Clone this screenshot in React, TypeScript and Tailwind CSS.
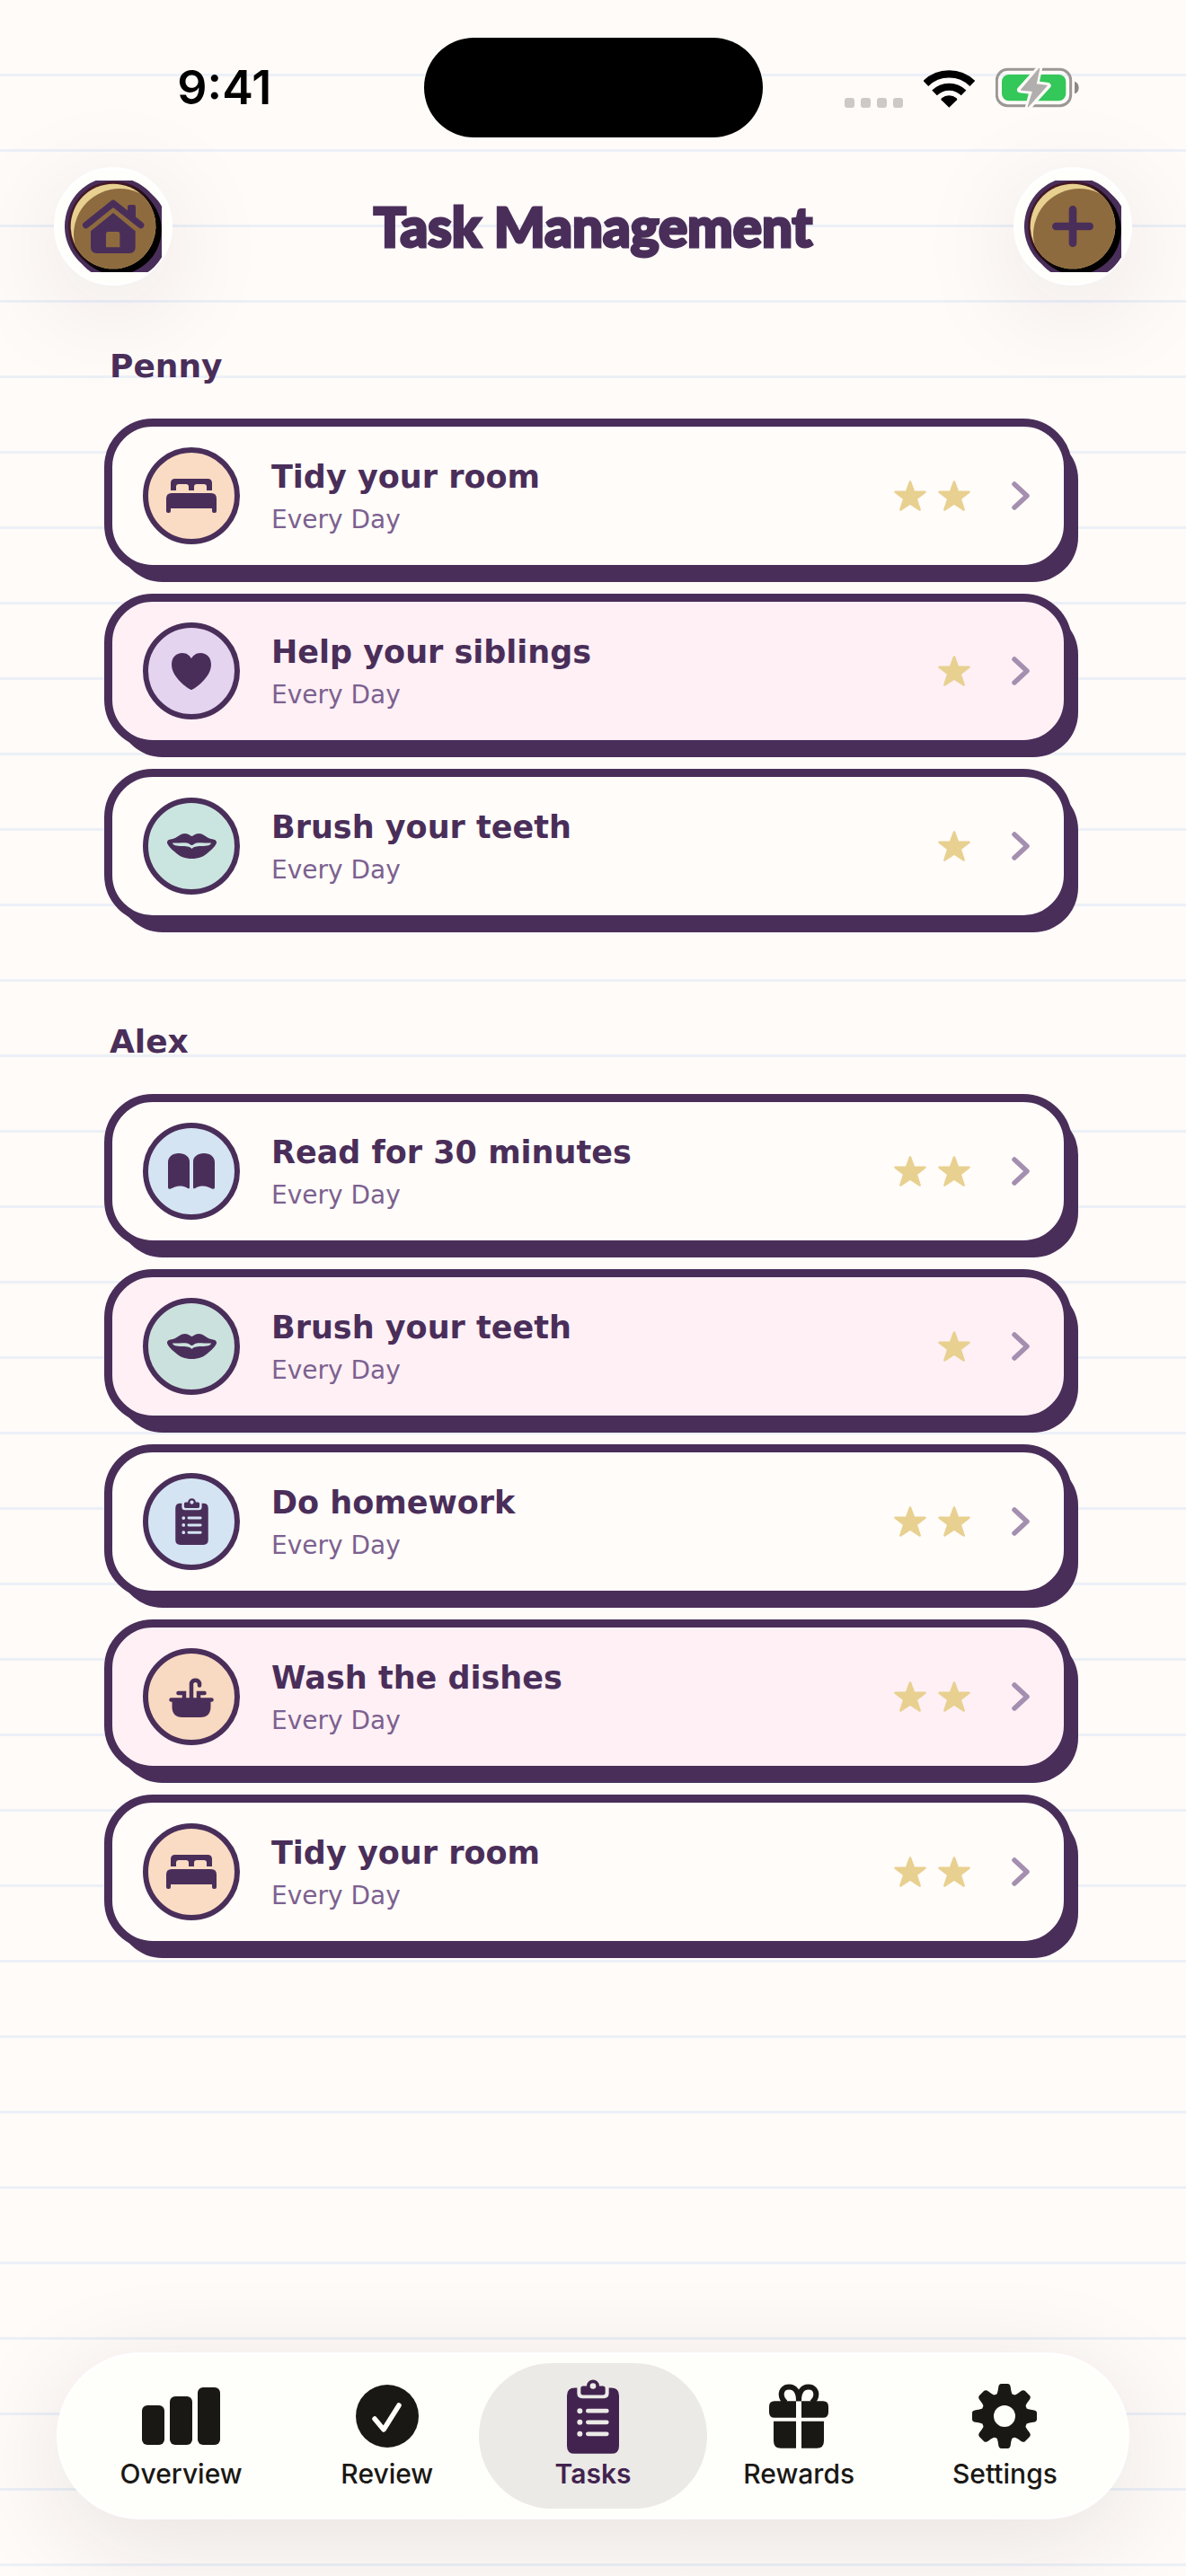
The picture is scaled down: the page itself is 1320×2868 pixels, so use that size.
import type { ReactNode } from "react";
import { clsx } from "clsx";

type IconName = "bed" | "heart" | "lips" | "book" | "clipboard" | "sink";

interface Task {
  title: string;
  repeat: string;
  icon: IconName;
  tint: string;
  stars: number;
}

interface Child {
  name: string;
  tasks: Task[];
}

const children: Child[] = [
  {
    name: "Penny",
    tasks: [
      { title: "Tidy your room", repeat: "Every Day", icon: "bed", tint: "bg-[#f9dcc3]", stars: 2 },
      { title: "Help your siblings", repeat: "Every Day", icon: "heart", tint: "bg-[#e4d4ef]", stars: 1 },
      { title: "Brush your teeth", repeat: "Every Day", icon: "lips", tint: "bg-[#cae5df]", stars: 1 },
    ],
  },
  {
    name: "Alex",
    tasks: [
      { title: "Read for 30 minutes", repeat: "Every Day", icon: "book", tint: "bg-[#d4e4f3]", stars: 2 },
      { title: "Brush your teeth", repeat: "Every Day", icon: "lips", tint: "bg-[#cbe1dd]", stars: 1 },
      { title: "Do homework", repeat: "Every Day", icon: "clipboard", tint: "bg-[#d4e4f3]", stars: 2 },
      { title: "Wash the dishes", repeat: "Every Day", icon: "sink", tint: "bg-[#f8d9c1]", stars: 2 },
      { title: "Tidy your room", repeat: "Every Day", icon: "bed", tint: "bg-[#f9dcc3]", stars: 2 },
    ],
  },
];

// ---------- task icons ----------

function BedIcon() {
  return (
    <svg width="56" height="38" viewBox="0 0 56 38" fill="currentColor" aria-hidden="true">
      <path d="M5 13V5q0-5 5-5H46q5 0 5 5V13H45V9q0-3-3-3H34q-3 0-3 3V13H25V9q0-3-3-3H14q-3 0-3 3V13Z" />
      <path d="M0 22q0-6 6-6H50q6 0 6 6V36q0 2-2 2H53q-2 0-2-2V33H5V36q0 2-2 2H2q-2 0-2-2Z" />
    </svg>
  );
}

function HeartIcon() {
  return (
    <svg width="44" height="41" viewBox="0 0 44 41" fill="currentColor" aria-hidden="true">
      <path d="M22 41C20 41 0 28 0 13C0 5 5 0 12 0C17 0 20 3 22 6C24 3 27 0 32 0C39 0 44 5 44 13C44 28 24 41 22 41Z" />
    </svg>
  );
}

function LipsIcon() {
  return (
    <svg width="55" height="28" viewBox="0 0 55 28" fill="currentColor" aria-hidden="true">
      <path
        fillRule="evenodd"
        d="M0 10C0 7 3 6.500 6 6C11 5 14 0 20 0C24 0 26 3 27.500 3C29 3 31 0 35 0C41 0 44 5 49 6C52 6.500 55 7 55 10C55 12 51 17 47 20C41 26 35 28 27.500 28C20 28 14 26 8 20C4 17 0 12 0 10ZM6 10.500C12 11 18 9.500 22 10.500C25 11 26 13 27.500 13C29 13 30 11 33 10.500C37 9.500 43 11 49 10.500C49 13 44 14 39 14C35 14 30 14 27.500 17C25 14 20 14 16 14C11 14 6 13 6 10.500Z"
      />
    </svg>
  );
}

function BookIcon() {
  return (
    <svg width="52" height="40" viewBox="0 0 52 40" fill="currentColor" aria-hidden="true">
      <path d="M0 10C0 4 5 0 12 0C19 0 24 4 24 9V38Q24 40 22 39C19 37 16 36.500 13 36.500C9 36.500 6 38 3 39.500Q0 40.500 0 38Z" />
      <path d="M52 10C52 4 47 0 40 0C33 0 28 4 28 9V38Q28 40 30 39C33 37 36 36.500 39 36.500C43 36.500 46 38 49 39.500Q52 40.500 52 38Z" />
    </svg>
  );
}

function ClipboardIcon({ width, height }: { width: number; height: number }) {
  return (
    <svg width={width} height={height} viewBox="126 82 174 248" fill="currentColor" aria-hidden="true">
      <path
        fillRule="evenodd"
        d="M152 110H160V128Q160 145 177 145H249Q266 145 266 128V110H274Q300 110 300 136V304Q300 330 274 330H152Q126 330 126 304V136Q126 110 152 110Z
          M160 187a9 9 0 1 0 18 0a9 9 0 1 0 -18 0Z M196 180H259a7 7 0 0 1 0 14H196a7 7 0 0 1 0 -14Z
          M160 225a9 9 0 1 0 18 0a9 9 0 1 0 -18 0Z M196 218H259a7 7 0 0 1 0 14H196a7 7 0 0 1 0 -14Z
          M160 264a9 9 0 1 0 18 0a9 9 0 1 0 -18 0Z M196 257H259a7 7 0 0 1 0 14H196a7 7 0 0 1 0 -14Z"
      />
      <path
        fillRule="evenodd"
        d="M180 104H192A21 21 0 0 1 234 104H246Q254 104 254 112V126Q254 134 246 134H180Q172 134 172 126V112Q172 104 180 104ZM203 104a10 10 0 1 0 20 0a10 10 0 1 0 -20 0Z"
      />
    </svg>
  );
}

function SinkIcon() {
  return (
    <svg width="50" height="45" viewBox="0 0 50 45" fill="none" stroke="currentColor" strokeWidth="4.500" strokeLinecap="round" aria-hidden="true">
      <path d="M25 24V7a4.700 4.700 0 0 1 9 0V9.500" />
      <path d="M10.500 18H17V24" />
      <path d="M39.500 18H33V24" />
      <path d="M2.500 25.500H47.500" />
      <path stroke="none" fill="currentColor" d="M3.500 26H46.500V33Q46.500 45 35 45H15Q3.500 45 3.500 33Z" />
    </svg>
  );
}

function TaskIcon({ name }: { name: IconName }) {
  if (name === "bed") return <BedIcon />;
  if (name === "heart") return <HeartIcon />;
  if (name === "lips") return <LipsIcon />;
  if (name === "book") return <BookIcon />;
  if (name === "clipboard") return <ClipboardIcon width={37} height={52} />;
  return <SinkIcon />;
}

function StarIcon() {
  return (
    <svg width="36" height="34" viewBox="0 0 36 34" fill="currentColor" stroke="currentColor" strokeWidth="2.500" strokeLinejoin="round" aria-hidden="true">
      <path d="M18 1.500L22 12.500L34.500 12.800L24.700 20.300L28.600 32.500L18 25.500L7.400 32.500L11.300 20.300L1.500 12.800L14 12.500Z" />
    </svg>
  );
}

function ChevronIcon() {
  return (
    <svg width="20" height="34" viewBox="0 0 20 34" fill="none" stroke="currentColor" strokeWidth="5.500" strokeLinecap="round" strokeLinejoin="round" aria-hidden="true">
      <path d="M3 4L17 17L3 30" />
    </svg>
  );
}

// ---------- status bar ----------

function WifiIcon() {
  return (
    <svg width="57" height="42" viewBox="315 76 171 126" fill="none" stroke="currentColor" aria-hidden="true">
      <path strokeWidth="25" d="M322 121A112 112 0 0 1 478 121" />
      <path strokeWidth="24" d="M351.200 152.200A69 69 0 0 1 448.800 152.200" />
      <path stroke="none" fill="currentColor" d="M400 201L374 176Q372 173 375 170Q386 161 400 161Q414 161 425 170Q428 173 426 176Z" />
    </svg>
  );
}

function BatteryIcon() {
  return (
    <svg width="93" height="45" viewBox="555 72 279 135" fill="none" aria-hidden="true">
      <rect x="559" y="79" width="247" height="121" rx="36" stroke="#9b9794" strokeWidth="9" />
      <rect x="576" y="96" width="214" height="88" rx="24" fill="#34c759" />
      <path d="M819 119Q833 124 833 140Q833 156 819 160Z" fill="#8b8885" />
      <g strokeLinejoin="round">
        <path d="M701 76L637 147L678 152L664 205L730 133L690 128Z" fill="#fffbf8" stroke="#fffbf8" strokeWidth="20" />
        <path d="M701 76L641 147L680 151L664 203L726 133L690 129Z" fill="#b1afad" stroke="#b1afad" strokeWidth="4" />
      </g>
    </svg>
  );
}

function StatusBar() {
  return (
    <div className="flex items-center pt-[42px]">
      <div className="flex flex-1 justify-center pl-7">
        <span className="text-[52px] leading-[60px] font-semibold text-black">9:41</span>
      </div>
      <div className="h-[111px] w-[377px] rounded-full bg-black" />
      <div className="flex flex-1 items-end justify-center gap-[23px] pr-7">
        <div className="flex gap-[7px]">
          {[0, 1, 2, 3].map((dot) => (
            <span key={dot} className="size-[11px] rounded-[3px] bg-[#cdc9c7]" />
          ))}
        </div>
        <WifiIcon />
        <BatteryIcon />
      </div>
    </div>
  );
}

// ---------- header ----------

// Gold coin with an offset shadow, the glyph is drawn on top of it
function Coin({ id, children: glyph }: { id: string; children: ReactNode }) {
  return (
    <svg width="108" height="102" viewBox="66 93 324 306" aria-hidden="true">
      <defs>
        <linearGradient id={`${id}-rim`} x1="0" y1="0" x2="1" y2="1">
          <stop offset="0.3" stopColor="#431a28" />
          <stop offset="0.7" stopColor="#000000" />
        </linearGradient>
        <clipPath id={`${id}-face`}>
          <circle cx="228" cy="246" r="142" />
        </clipPath>
      </defs>
      <circle cx="231" cy="246" r="165" fill="#4a2e5a" />
      <circle cx="249" cy="264" r="165" fill="#4a2e5a" />
      <circle cx="240" cy="258" r="149" fill="#000000" />
      <circle cx="229" cy="246" r="151" fill={`url(#${id}-rim)`} />
      <circle cx="228" cy="246" r="142" fill="#e8d090" />
      <circle cx="250" cy="274" r="154" fill="#8e6b3e" clipPath={`url(#${id}-face)`} />
      {glyph}
    </svg>
  );
}

function CoinButton({ label, children: coin }: { label: string; children: ReactNode }) {
  return (
    <button
      type="button"
      aria-label={label}
      className="flex size-[132px] items-center justify-center rounded-full border-[3px] border-white bg-[#fefefb] shadow-[0_24px_120px_rgba(40,30,35,0.10)]"
    >
      {coin}
    </button>
  );
}

function Header() {
  return (
    <header className="mt-[33px] flex items-center justify-between px-[60px]">
      <CoinButton label="Home">
        <Coin id="home">
          <g fill="#4a2e5a">
            <path d="M137 242L228 169L320 242" fill="none" stroke="#4a2e5a" strokeWidth="22" strokeLinecap="round" strokeLinejoin="round" />
            <path d="M276 200V181Q276 174 283 174H296Q303 174 303 181V226Z" />
            <path
              fillRule="evenodd"
              d="M228 201L302 262V316Q302 336 282 336H173Q153 336 153 316V262ZM211 264Q204 264 204 271V316H250V271Q250 264 243 264Z"
            />
          </g>
        </Coin>
      </CoinButton>
      <h1 className="font-['Lato','Liberation_Sans',sans-serif] text-[60px] leading-[72px] font-black text-[#4a2e5a] [-webkit-text-stroke:3px_#4a2e5a]">
        Task Management
      </h1>
      <CoinButton label="Add task">
        <Coin id="add">
          <path d="M172 246H284M228 190V302" stroke="#4a2e5a" strokeWidth="26" strokeLinecap="round" />
        </Coin>
      </CoinButton>
    </header>
  );
}

// ---------- task list ----------

function TaskCard({ task, pink }: { task: Task; pink: boolean }) {
  return (
    <button
      type="button"
      className={clsx(
        "flex w-full items-center rounded-[54px] border-[9px] border-[#4a2e5a] py-[23px] pr-[38px] pl-[34px] text-left shadow-[11px_14px_0_-4px_#4a2e5a]",
        pink ? "bg-[#fef0f5]" : "bg-[#fffcf9]",
      )}
    >
      <span
        className={clsx(
          "flex size-[108px] shrink-0 items-center justify-center rounded-full border-[6px] border-[#4a2e5a] text-[#4a2e5a]",
          task.tint,
        )}
      >
        <TaskIcon name={task.icon} />
      </span>
      <span className="ml-[35px] flex min-w-0 flex-1 flex-col font-['DejaVu_Sans',sans-serif]">
        <span className="text-[35px] leading-[54px] font-bold text-[#4a2e5a]">{task.title}</span>
        <span className="text-[28px] leading-[42px] text-[#7c6190]">{task.repeat}</span>
      </span>
      <span className="flex gap-[13px] text-[#e8d090]">
        {Array.from({ length: task.stars }, (_, i) => (
          <StarIcon key={i} />
        ))}
      </span>
      <span className="ml-[46px] text-[#a48fb0]">
        <ChevronIcon />
      </span>
    </button>
  );
}

function ChildSection({ child }: { child: Child }) {
  return (
    <section>
      <h2 className="mb-[34px] pl-1.5 font-['DejaVu_Sans',sans-serif] text-[36px] leading-[48px] font-bold text-[#4a2e5a]">
        {child.name}
      </h2>
      <ul className="flex flex-col gap-[23px]">
        {child.tasks.map((task, i) => (
          <li key={task.title}>
            <TaskCard task={task} pink={i % 2 === 1} />
          </li>
        ))}
      </ul>
    </section>
  );
}

// ---------- tab bar ----------

function BarsIcon() {
  return (
    <svg width="87" height="64" viewBox="0 0 87 64" fill="currentColor" aria-hidden="true">
      <rect x="0" y="20" width="25" height="44" rx="6" />
      <rect x="31" y="10" width="25" height="54" rx="6" />
      <rect x="62" y="0" width="25" height="64" rx="6" />
    </svg>
  );
}

function CheckIcon() {
  return (
    <svg width="70" height="70" viewBox="0 0 70 70" aria-hidden="true">
      <circle cx="35" cy="35" r="35" fill="currentColor" />
      <path d="M21 38L31 50L48 23" fill="none" stroke="#fefefb" strokeWidth="5.500" strokeLinecap="round" strokeLinejoin="round" />
    </svg>
  );
}

function GiftIcon() {
  return (
    <svg width="66" height="72" viewBox="795 100 198 215" fill="currentColor" aria-hidden="true">
      <path d="M885 157V213H813Q795 213 795 195V175Q795 157 813 157Z" />
      <path d="M903 157V213H975Q993 213 993 195V175Q993 157 975 157Z" />
      <path d="M810 225H885V315H834Q810 315 810 291Z" />
      <path d="M978 225H903V315H954Q978 315 978 291Z" />
      <g fill="none" stroke="currentColor" strokeWidth="18">
        <path d="M894 157C894 125 880 110 862 110C845 110 836 122 836 135C836 146 842 155 850 162" />
        <path d="M894 157C894 125 908 110 926 110C943 110 952 122 952 135C952 146 946 155 938 162" />
      </g>
    </svg>
  );
}

const teeth = [0, 45, 90, 135, 180, 225, 270, 315];

function GearIcon() {
  return (
    <svg width="72" height="72" viewBox="-36 -36 72 72" fill="currentColor" aria-hidden="true">
      <circle r="19" fill="none" stroke="currentColor" strokeWidth="14" />
      {teeth.map((angle) => (
        <path
          key={angle}
          transform={`rotate(${angle})`}
          d="M-10 -22Q-7.500 -25 -6.800 -32Q-6.300 -36 -3.500 -36H3.500Q6.300 -36 6.800 -32Q7.500 -25 10 -22Z"
        />
      ))}
    </svg>
  );
}

const tabs = [
  { label: "Overview", icon: <BarsIcon /> },
  { label: "Review", icon: <CheckIcon /> },
  { label: "Tasks", icon: <ClipboardIcon width={58} height={83} /> },
  { label: "Rewards", icon: <GiftIcon /> },
  { label: "Settings", icon: <GearIcon /> },
];

function TabBar({ active }: { active: string }) {
  return (
    <nav className="mx-[63px] mt-auto mb-[63px] flex rounded-full border-[3px] border-white bg-[#fefefa] px-[21px] py-[9px] shadow-[0_24px_120px_rgba(40,30,35,0.11)]">
      {tabs.map((tab) => {
        const selected = tab.label === active;
        return (
          <div key={tab.label} className="flex flex-1">
            <a
              href={`#${tab.label.toLowerCase()}`}
              aria-current={selected ? "page" : undefined}
              className={clsx(
                "-mx-3 flex flex-1 flex-col items-center gap-1 rounded-full pt-[17px] pb-[21px]",
                selected ? "bg-[#ebeae7] text-[#42234f]" : "text-[#1a1815]",
              )}
            >
              <span className="flex h-[84px] items-center">{tab.icon}</span>
              <span className={clsx("text-[30px] leading-9", selected ? "font-semibold" : "font-medium")}>{tab.label}</span>
            </a>
          </div>
        );
      })}
    </nav>
  );
}

export default function App() {
  return (
    <div className="flex min-h-screen flex-col bg-[#fffbf8] bg-[linear-gradient(#fffbf8,#fffbf8),linear-gradient(#ecf0f7_3px,transparent_3px)] bg-[size:100%_3px,100%_84px] bg-[position:0_0,0_82px] font-['Inter','Liberation_Sans',sans-serif] [background-repeat:no-repeat,repeat]">
      <StatusBar />
      <Header />
      <main className="mt-[66px] mb-[108px] flex flex-col gap-[108px] pr-[127px] pl-[116px]">
        {children.map((child) => (
          <ChildSection key={child.name} child={child} />
        ))}
      </main>
      <TabBar active="Tasks" />
    </div>
  );
}
